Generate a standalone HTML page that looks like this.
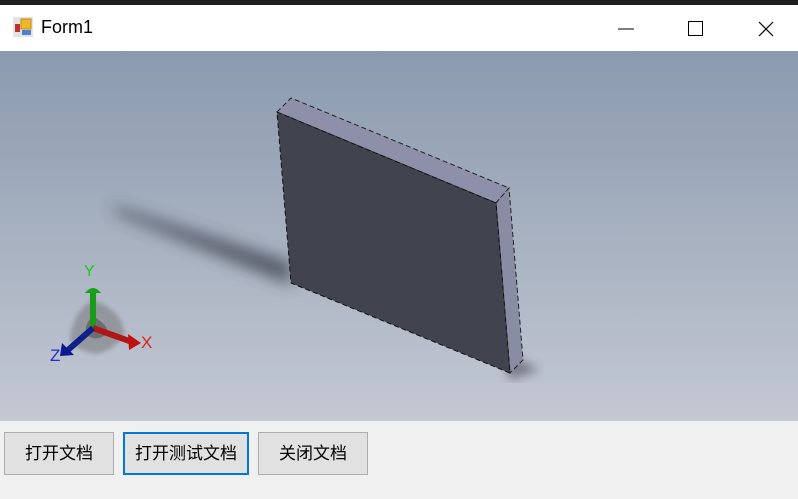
<!DOCTYPE html><html><head><meta charset="utf-8"><style>
body{margin:0;width:798px;height:499px;overflow:hidden;background:#f0f0f0;font-family:"Liberation Sans","Noto Sans CJK SC",sans-serif;position:relative}
.top{position:absolute;left:0;top:0;width:798px;height:5px;background:#1e1e1e}
.title{position:absolute;left:0;top:5px;width:798px;height:46px;background:#fff}
.title span{position:absolute;left:41px;top:12px;font-size:18px;color:#000}
.vp{position:absolute;left:0;top:51px;width:798px;height:370px;background:linear-gradient(#8a9aae,#c4c8d3)}
.btn{position:absolute;top:432px;height:41px;background:#e1e1e1;border:1px solid #adadad;font-size:17px;text-align:center;line-height:41px;color:#000}
</style></head><body>
<div class="top"></div>
<div class="title">
<svg style="position:absolute;left:13px;top:12px" width="20" height="20"><rect x="0" y="0" width="20" height="20" fill="#e4e4e4"/><rect x="8" y="2" width="10" height="10" fill="#f0b828" stroke="#c08a10"/><rect x="2" y="7" width="5" height="8" fill="#c03030"/><rect x="9" y="13" width="9" height="5" fill="#4a80d8"/></svg>
<span>Form1</span>
<svg style="position:absolute;left:600px;top:12px" width="180" height="24"><line x1="18" y1="12" x2="34" y2="12" stroke="#000" stroke-width="1"/><rect x="88.5" y="4.5" width="14" height="14" fill="none" stroke="#000"/><path d="M159 5L173 19M173 5L159 19" stroke="#000" stroke-width="1.2"/></svg>
</div>
<div class="vp">
<svg width="798" height="370" viewBox="0 51 798 370">
<defs><filter id="b" x="-50%" y="-50%" width="200%" height="200%"><feGaussianBlur stdDeviation="8"/></filter><filter id="b2"><feGaussianBlur stdDeviation="5"/></filter><filter id="b3"><feGaussianBlur stdDeviation="2"/></filter></defs>
<path d="M110 205 L290 262 L292 285 L120 215Z" fill="#3a3e48" opacity="0.8" filter="url(#b)"/>
<path d="M500 350 L540 370 L510 380Z" fill="#4a4e58" opacity="0.6" filter="url(#b2)"/>
<polygon points="277,112 291,98 509,188 496,203" fill="#8e8fa8" stroke="#222" stroke-dasharray="5,3"/>
<polygon points="496,203 509,188 523,360 510,373" fill="#8a8ca4" stroke="#222" stroke-dasharray="5,3"/>
<polygon points="277,112 496,203 510,373 291,283" fill="#41444e" stroke="#111" stroke-dasharray="5,3"/>
<path d="M93 300 Q122 310 125 335 Q112 352 95 354 Q75 350 70 340 Q72 312 93 300Z" fill="#6a6a6a" opacity="0.45" filter="url(#b3)"/>
<path d="M93 316 Q108 325 108 333 Q98 342 88 336 Q82 326 93 316Z" fill="#333" opacity="0.4"/>
<line x1="93" y1="328" x2="93" y2="293" stroke="#1c9a1c" stroke-width="6"/>
<path d="M85 293 Q93 283 101 293Z" fill="#18a018"/>
<line x1="93" y1="328" x2="132" y2="342" stroke="#b01818" stroke-width="6"/>
<path d="M128 334 L141 343 L129 350Z" fill="#c01010"/>
<line x1="93" y1="328" x2="68" y2="350" stroke="#10208a" stroke-width="6"/>
<path d="M62 343 L60 356 L74 355Z" fill="#0a1a90"/>
<text x="84" y="276" fill="#1ec81e" font-size="16" font-family="Liberation Sans">Y</text>
<text x="141" y="348" fill="#e02020" font-size="17" font-family="Liberation Sans">X</text>
<text x="50" y="361" fill="#2030d0" font-size="17" font-family="Liberation Sans">Z</text>
</svg>
</div>
<div class="btn" style="left:4px;width:108px">打开文档</div>
<div class="btn" style="left:123px;width:122px;border:2px solid #0078d7;height:39px;line-height:39px">打开测试文档</div>
<div class="btn" style="left:258px;width:108px">关闭文档</div>
</body></html>
